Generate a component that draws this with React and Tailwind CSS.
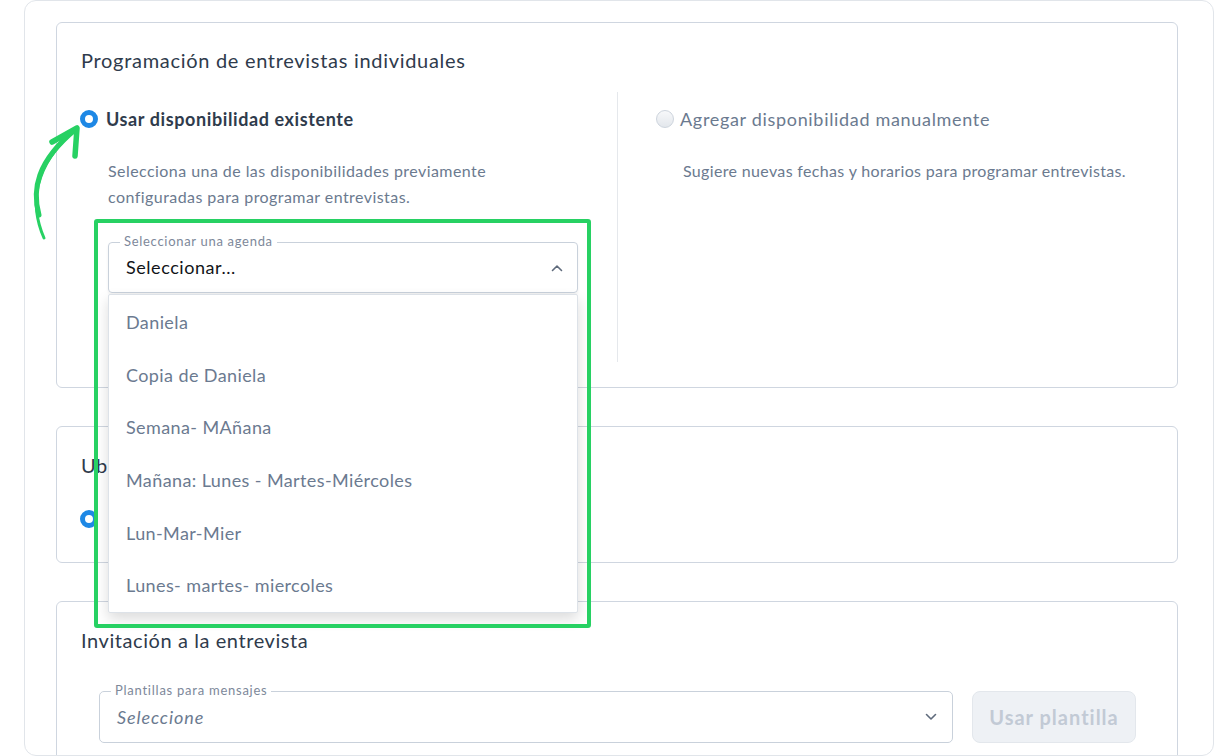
import React from 'react';

const agendas = [
  'Daniela',
  'Copia de Daniela',
  'Semana- MAñana',
  'Mañana: Lunes - Martes-Miércoles',
  'Lun-Mar-Mier',
  'Lunes- martes- miercoles',
];

function Radio({ checked }) {
  if (checked) {
    return <span className="block w-[18px] h-[18px] rounded-full border-[5px] border-[#1e88e5] bg-white shrink-0" />;
  }
  return (
    <span className="block w-[18px] h-[18px] rounded-full border border-[#cdd4dd] bg-gradient-to-b from-[#f7f8fa] to-[#e3e7ec] shrink-0" />
  );
}

function ChevronUp() {
  return (
    <svg width="12" height="8" viewBox="0 0 12 8" fill="none">
      <polyline points="1.5,6.5 6,2 10.5,6.5" stroke="#5f6b7c" strokeWidth="1.6" strokeLinecap="round" strokeLinejoin="round" />
    </svg>
  );
}

function ChevronDown() {
  return (
    <svg width="12" height="8" viewBox="0 0 12 8" fill="none">
      <polyline points="1.5,1.5 6,6 10.5,1.5" stroke="#5f6b7c" strokeWidth="1.6" strokeLinecap="round" strokeLinejoin="round" />
    </svg>
  );
}

// green hand-drawn pointer next to the first option
function CurvedArrow() {
  return (
    <svg className="absolute left-[20px] top-[100px] pointer-events-none" width="80" height="150" viewBox="20 100 80 150" fill="none">
      <path d="M44,238 C30,206 32,166 76,129" stroke="#27d163" strokeWidth="3" strokeLinecap="round" />
      <path d="M39,215 C32,190 36,162 76,129" stroke="#27d163" strokeWidth="5" strokeLinecap="round" />
      <path d="M52,142 L77,128 L75,156" stroke="#27d163" strokeWidth="5.5" strokeLinecap="round" strokeLinejoin="round" />
    </svg>
  );
}

export default function App() {
  return (
    <div className="relative w-[1214px] h-[756px] bg-white overflow-hidden font-['Lato',sans-serif]">
      <div className="ml-[24px] w-[1190px] h-[756px] border border-[#e1e5ea] rounded-[12px] overflow-hidden pl-[31px] pr-[35px] pt-[21px]">
        {/* agenda scheduling */}
        <section className="border border-[#cfd6e0] rounded-[6px] px-[24px] pt-[23px] pb-[25px]">
          <h2 className="text-[20px] leading-[28px] tracking-[0.7px] text-[#2f3b4c]">Programación de entrevistas individuales</h2>
          <div className="mt-[18px] grid grid-cols-2 h-[270px]">
            <div className="pt-[14px]">
              <label className="flex items-center gap-[8px] h-[26px] -ml-px">
                <Radio checked />
                <span className="text-[18px] font-bold tracking-[0.6px] text-[#2f3b4c]">Usar disponibilidad existente</span>
              </label>
              <p className="mt-[26px] pl-[27px] text-[16px] leading-[26px] tracking-[0.44px] text-[#6b7a8f]">
                Selecciona una de las disponibilidades previamente
                <br />
                configuradas para programar entrevistas.
              </p>
              <div className="relative mt-[32px] ml-[27px] w-[470px] h-[51px]">
                <div className="flex items-center justify-between h-full border border-[#c9d1db] rounded-[4px] pl-[17px] pr-[14px] shadow-[0_2px_3px_rgba(0,0,0,0.06)]">
                  <span className="text-[18px] tracking-[0.55px] text-[#111418]">Seleccionar...</span>
                  <ChevronUp />
                </div>
                <span className="absolute -top-[9px] left-[12px] px-[4px] bg-white text-[13px] leading-[16px] tracking-[0.7px] text-[#7d889a]">
                  Seleccionar una agenda
                </span>
                <ul className="absolute z-10 left-0 top-[52px] w-[470px] pt-[1px] bg-white border border-[#dde2e8] rounded-[2px] shadow-[0_6px_14px_rgba(0,0,0,0.14)]">
                  {agendas.map((a) => (
                    <li key={a} className="h-[52.7px] flex items-center pl-[17px] text-[18px] tracking-[0.4px] text-[#6b7a90]">
                      {a}
                    </li>
                  ))}
                </ul>
                <div className="absolute z-20 -left-[14px] -top-[23px] w-[497px] h-[409px] border-[4px] border-[#27d163] rounded-[3px] pointer-events-none" />
              </div>
            </div>
            <div className="border-l border-[#e5e8ec] pl-[38px] pt-[14px]">
              <label className="flex items-center gap-[6px] h-[26px]">
                <Radio />
                <span className="text-[18px] tracking-[0.68px] text-[#6b7a8f]">Agregar disponibilidad manualmente</span>
              </label>
              <p className="mt-[26px] pl-[27px] text-[16px] leading-[26px] tracking-[0.34px] text-[#6b7a8f]">
                Sugiere nuevas fechas y horarios para programar entrevistas.
              </p>
            </div>
          </div>
        </section>

        {/* location */}
        <section className="mt-[38px] border border-[#cfd6e0] rounded-[6px] px-[24px] pt-[24px] pb-[30px]">
          <h2 className="text-[20px] leading-[28px] tracking-[0.6px] text-[#2f3b4c]">Ubicación</h2>
          <div className="mt-[27px] flex items-center h-[26px] -ml-px">
            <Radio checked />
          </div>
        </section>

        {/* invitation */}
        <section className="mt-[38px] border border-[#cfd6e0] rounded-[6px] px-[24px] pt-[24px] pb-[30px]">
          <h2 className="text-[20px] leading-[28px] tracking-[0.58px] text-[#2f3b4c]">Invitación a la entrevista</h2>
          <div className="mt-[37px] ml-[18px] flex gap-[19px]">
            <div className="relative w-[854px] h-[52px]">
              <div className="flex items-center justify-between h-full border border-[#c9d1db] rounded-[5px] pl-[17px] pr-[15px]">
                <span className="text-[18px] italic tracking-[0.9px] text-[#6b7a90]">Seleccione</span>
                <ChevronDown />
              </div>
              <span className="absolute -top-[9px] left-[12px] px-[4px] bg-white text-[13px] leading-[16px] tracking-[0.75px] text-[#7d889a]">
                Plantillas para mensajes
              </span>
            </div>
            <button className="w-[164px] h-[52px] rounded-[8px] bg-[#eef1f5] border border-[#e3e7ec] text-[20px] font-bold tracking-[1px] text-[#c2cad5]">
              Usar plantilla
            </button>
          </div>
        </section>
      </div>
      <CurvedArrow />
    </div>
  );
}
